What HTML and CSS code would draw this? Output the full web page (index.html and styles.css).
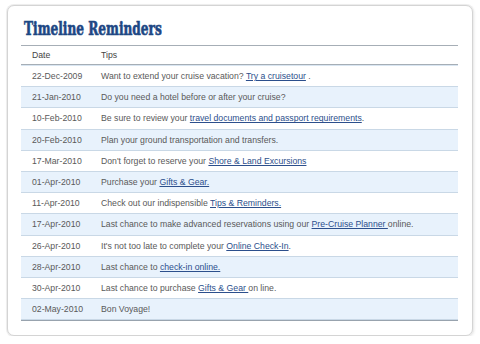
FILE: index.html
```html
<!DOCTYPE html>
<html lang="en">
<head>
<meta charset="utf-8">
<title>Timeline Reminders</title>
<link rel="stylesheet" href="styles.css">
</head>
<body>
<div class="card">
  <h1 class="title"><span class="title-text">Timeline Reminders</span></h1>
  <table class="timeline">
    <colgroup><col class="col-date"><col class="col-tip"></colgroup>
    <thead>
      <tr><th>Date</th><th>Tips</th></tr>
    </thead>
    <tbody>
      <tr><td>22-Dec-2009</td><td>Want to extend your cruise vacation? <a href="#">Try a cruisetour</a> .</td></tr>
      <tr><td>21-Jan-2010</td><td>Do you need a hotel before or after your cruise?</td></tr>
      <tr><td>10-Feb-2010</td><td>Be sure to review your <a href="#">travel documents and passport requirements</a>.</td></tr>
      <tr><td>20-Feb-2010</td><td>Plan your ground transportation and transfers.</td></tr>
      <tr><td>17-Mar-2010</td><td>Don't forget to reserve your <a href="#">Shore &amp; Land Excursions</a></td></tr>
      <tr><td>01-Apr-2010</td><td>Purchase your <a href="#">Gifts &amp; Gear.</a></td></tr>
      <tr><td>11-Apr-2010</td><td>Check out our indispensible <a href="#">Tips &amp; Reminders.</a></td></tr>
      <tr><td>17-Apr-2010</td><td>Last chance to make advanced reservations using our <a href="#">Pre-Cruise Planner </a>online.</td></tr>
      <tr><td>26-Apr-2010</td><td>It's not too late to complete your <a href="#">Online Check-In</a>.</td></tr>
      <tr><td>28-Apr-2010</td><td>Last chance to <a href="#">check-in online.</a></td></tr>
      <tr><td>30-Apr-2010</td><td>Last chance to purchase <a href="#">Gifts &amp; Gear </a>on line.</td></tr>
      <tr><td>02-May-2010</td><td>Bon Voyage!</td></tr>
    </tbody>
  </table>
</div>
</body>
</html>
```
FILE: styles.css
```css
html, body {
  margin: 0;
  padding: 0;
  background: #ffffff;
}

body {
  font-family: "Liberation Sans Narrow", "Liberation Sans", Arial, sans-serif;
  font-size: 8.7px;
  color: #595959;
}

.card {
  box-sizing: border-box;
  width: 466px;
  height: 331px;
  margin: 5px 0 0 7px;
  padding: 11px 14px 0 13px;
  border: 1px solid #d4d4d4;
  border-radius: 7px;
  background: #ffffff;
  box-shadow: 0 0 0 1px #ededed, 1px 1px 3px rgba(0, 0, 0, 0.10);
}

.title {
  margin: 0 0 4px 0;
  padding-left: 3px;
  height: 24px;
  line-height: 24px;
  font-family: "DejaVu Serif", "Liberation Serif", serif;
  font-stretch: condensed;
  font-weight: bold;
  font-size: 18px;
  color: #1d4784;
  white-space: nowrap;
}

.title-text {
  display: inline-block;
  transform: scaleX(0.75);
  transform-origin: 0 50%;
  -webkit-text-stroke: 0.6px #1d4784;
}

.timeline {
  width: 100%;
  table-layout: fixed;
  border-collapse: separate;
  border-spacing: 0;
  border-bottom: 1px solid #98a3ae;
}

.col-date {
  width: 69px;
}

.timeline th,
.timeline td {
  padding: 0 0 0 11px;
  text-align: left;
  vertical-align: middle;
  white-space: nowrap;
}

.timeline th {
  height: 18px;
  font-weight: normal;
  color: #444444;
  border-top: 1px solid #a6aeb6;
  border-bottom: 1px solid #a6aeb6;
}

.timeline td {
  height: 20.2px;
  border-bottom: 1px solid #c9d8e6;
}

.timeline tbody tr:first-child td {
  border-top: 1px solid #d9e6f2;
}

.timeline tbody tr:nth-child(even) td {
  background: #e8f2fc;
}

.timeline a {
  color: #2c4f8c;
  text-decoration: underline;
}
```
